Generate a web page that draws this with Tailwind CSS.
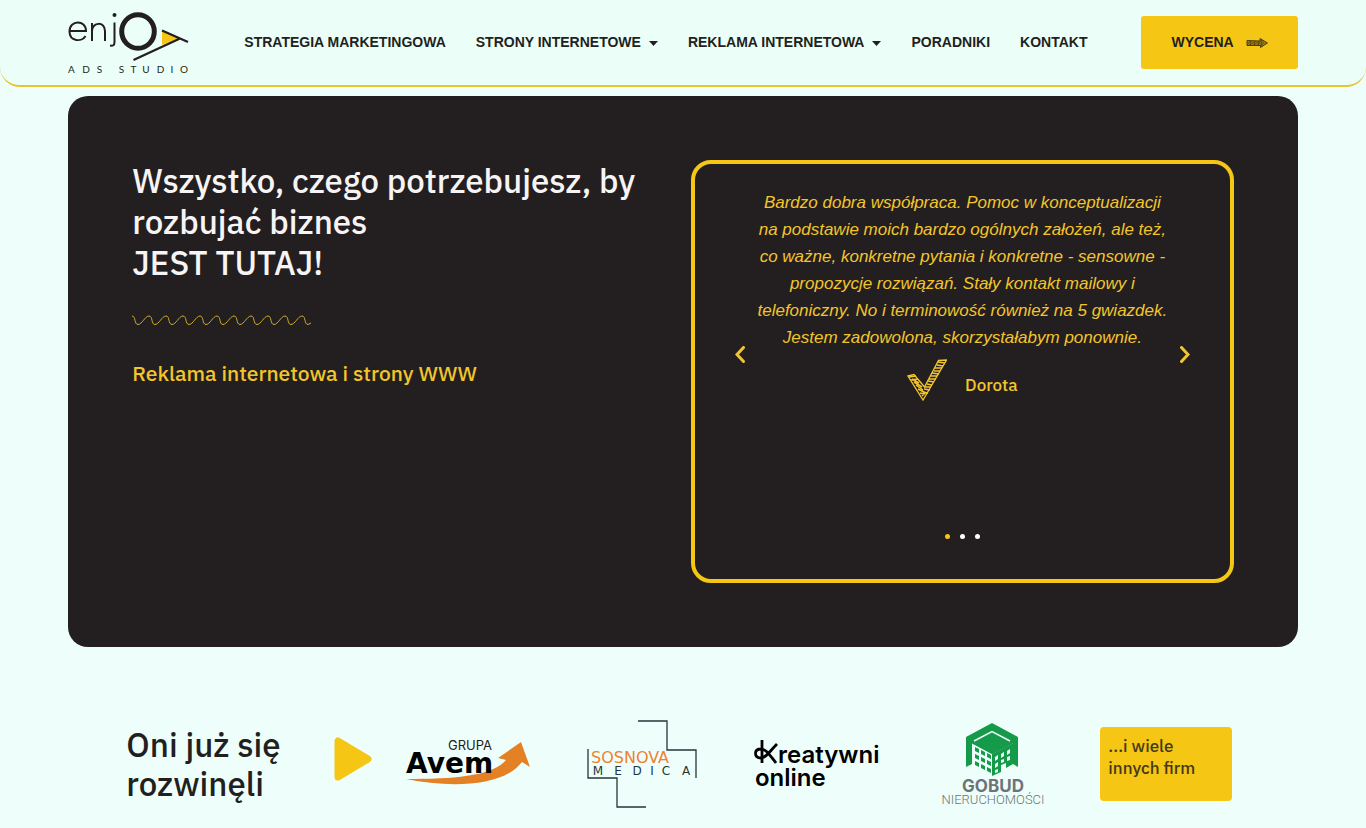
<!DOCTYPE html>
<html lang="pl">
<head>
    <meta charset="UTF-8">
    <meta name="viewport" content="width=device-width, initial-scale=1.0">
    <title>Enjoy Ads Studio</title>
    <script src="https://cdn.jsdelivr.net/npm/@tailwindcss/browser@4"></script>
</head>
<body class="bg-[#eefffb] text-[#231f20] font-['IBM_Plex_Sans','Noto_Sans',sans-serif] overflow-x-hidden">

    <!-- Header -->
    <header class="flex items-center justify-between px-[5%] h-[87px] border-b-2 border-[#e8c52f] rounded-b-[20px] bg-[#ebfff8]">
        <a href="#" aria-label="enjoy ads studio" class="mt-px">
            <svg class="w-[122px] h-[64px]" viewBox="0 0 122 64" fill="none" stroke="#231f20">
                <path d="M1.500 20H18C18 8.500 1.500 8.500 1.500 20.500C1.500 30.500 14 31.500 17.500 25" stroke-width="2"/>
                <path d="M24 30V12M24 20C24 11 37 10 37 20V30" stroke-width="2"/>
                <path d="M46.500 11.500V31C46.500 34.500 45 35 42 34.500" stroke-width="2"/>
                <circle cx="46.500" cy="4" r="2" fill="#231f20" stroke="none"/>
                <ellipse cx="70" cy="20.500" rx="16.300" ry="16.800" stroke-width="5"/>
                <path d="M94 19.500L112 27.500L94 34Z" fill="#f6c614" stroke="none"/>
                <path d="M94 19.500L120 31M65.500 49L112 27.500" stroke-width="2.300"/>
                <g fill="#231f20" stroke="none" font-family="Lato, sans-serif" font-size="10" text-anchor="middle">
                    <text x="3.500" y="61.500">A</text>
                    <text x="18" y="61.500">D</text>
                    <text x="31.500" y="61.500">S</text>
                    <text x="53.500" y="61.500">S</text>
                    <text x="65.500" y="61.500">T</text>
                    <text x="78" y="61.500">U</text>
                    <text x="92.500" y="61.500">D</text>
                    <text x="104" y="61.500">I</text>
                    <text x="116" y="61.500">O</text>
                </g>
            </svg>
        </a>
        <nav class="flex items-center gap-[30px] font-['Liberation_Sans',sans-serif] font-bold text-[14px]">
            <a href="#">STRATEGIA MARKETINGOWA</a>
            <a href="#" class="flex items-center gap-2">STRONY INTERNETOWE
                <svg class="w-[9px] h-[5px] mt-0.5" viewBox="0 0 9 5"><path d="M0 0H9L4.500 5Z" fill="#231f20"/></svg>
            </a>
            <a href="#" class="flex items-center gap-2">REKLAMA INTERNETOWA
                <svg class="w-[9px] h-[5px] mt-0.5" viewBox="0 0 9 5"><path d="M0 0H9L4.500 5Z" fill="#231f20"/></svg>
            </a>
            <a href="#">PORADNIKI</a>
            <a href="#">KONTAKT</a>
        </nav>
        <button class="flex items-center gap-3 h-[53px] px-[30px] rounded-[3px] bg-[#f6c614] font-['Liberation_Sans',sans-serif] font-bold text-[14px]">WYCENA
            <svg class="w-[22px] h-[10px]" viewBox="0 0 22 10" fill="none" stroke="#4a3d14" stroke-width="1">
                <path d="M1 2.500L14 3L14 0.500L21.500 5L14.500 9.500L14.500 7.500L1 7.500Z" fill="#9b7c13"/>
                <path d="M1 6.500L5 3L4 7L9 3L8 7L13 3L12 7L16 2L15 8L18 4" stroke-width="0.700"/>
            </svg>
        </button>
    </header>

    <main class="px-[5%]">
        <!-- Hero -->
        <section class="mt-[9px] grid grid-cols-2 gap-4 p-16 rounded-[20px] bg-[#231f20]">
            <div>
                <h1 class="text-[#f7f4f5] font-medium text-[33px] leading-[41px] whitespace-nowrap">Wszystko, czego potrzebujesz, by<br>rozbujać biznes<br>JEST TUTAJ!</h1>
                <svg class="mt-8 w-[180px] h-[11px]" viewBox="0 0 180 11" fill="none" stroke="#cfae2a" stroke-width="1">
                    <path d="M0 1C4 1 2 9.500 6 9.500C10 9.500 13 1 17 1C21 1 19 9.500 23 9.500C27 9.500 30 1 34 1C38 1 36 9.500 40 9.500C44 9.500 47 1 51 1C55 1 53 9.500 57 9.500C61 9.500 64 1 68 1C72 1 70 9.500 74 9.500C78 9.500 81 1 85 1C89 1 87 9.500 91 9.500C95 9.500 98 1 102 1C106 1 104 9.500 108 9.500C112 9.500 115 1 119 1C123 1 121 9.500 125 9.500C129 9.500 132 1 136 1C140 1 138 9.500 142 9.500C146 9.500 149 1 153 1C157 1 155 9.500 159 9.500C163 9.500 166 1 170 1C174 1 172 9.500 176 9.500L179 8"/>
                </svg>
                <h2 class="mt-8 text-[#f2c52b] font-medium text-[21px] leading-[30px]">Reklama internetowa i strony WWW</h2>
            </div>

            <!-- Testimonials -->
            <div class="border-4 border-[#f6c614] rounded-[20px] pt-6 pb-10 px-10 text-[#f2c52b]">
                <div class="flex items-center justify-between min-h-[332px]">
                    <button aria-label="Poprzednia opinia">
                        <svg class="w-[10px] h-[17px]" viewBox="0 0 10 17" fill="none" stroke="currentColor" stroke-width="3"><path d="M8.500 1.500L2 8.500L8.500 15.500" stroke-linecap="round"/></svg>
                    </button>
                    <div class="self-start pt-px text-center">
                        <p class="font-['Liberation_Sans',sans-serif] italic text-[17px] leading-[27px] whitespace-nowrap">Bardzo dobra współpraca. Pomoc w konceptualizacji<br>na podstawie moich bardzo ogólnych założeń, ale też,<br>co ważne, konkretne pytania i konkretne - sensowne -<br>propozycje rozwiązań. Stały kontakt mailowy i<br>telefoniczny. No i terminowość również na 5 gwiazdek.<br>Jestem zadowolona, skorzystałabym ponownie.</p>
                        <div class="mt-2 flex items-center justify-center gap-[18px]">
                            <svg class="w-[40px] h-[42px]" viewBox="0 0 40 42" fill="none" stroke="currentColor">
                                <path d="M1 17L7 15.500L17.500 28L31.500 1.500L39.500 1L16 41Z" stroke-width="1.300"/>
                                <path d="M2 18L9 17M4 21L11 20M5 20L12 24M7 23L15 28M9 26L16 31M11 30L17 33M13 34L18 35M15 37L19 33M31 3L38 4M30 6L36 7M28 9L35 9M27 12L33 12M25 14L32 15M24 17L30 17M22 20L29 20M21 22L27 23M20 25L25 26M18 28L24 28M17 30L23 31M16 33L21 34" stroke-width="1.500"/>
                            </svg>
                            <span class="pt-2.5 font-medium text-[17px] leading-6">Dorota</span>
                        </div>
                    </div>
                    <button aria-label="Następna opinia">
                        <svg class="w-[10px] h-[17px]" viewBox="0 0 10 17" fill="none" stroke="currentColor" stroke-width="3"><path d="M1.500 1.500L8 8.500L1.500 15.500" stroke-linecap="round"/></svg>
                    </button>
                </div>
                <div class="mt-3.5 flex justify-center gap-2.5">
                    <button aria-label="Opinia 1" class="size-[5px] rounded-full bg-[#f6c614]"></button>
                    <button aria-label="Opinia 2" class="size-[5px] rounded-full bg-white"></button>
                    <button aria-label="Opinia 3" class="size-[5px] rounded-full bg-white"></button>
                </div>
            </div>
        </section>

        <!-- Clients -->
        <section class="mt-[73px] pl-[58px] pr-[44px] grid grid-cols-[254px_repeat(5,1fr)] items-center justify-items-center">
            <div class="w-full flex items-center justify-between pr-2">
                <h2 class="font-medium text-[33px] leading-[39px] whitespace-nowrap">Oni już się<br>rozwinęli</h2>
                <svg class="w-[38px] h-[44px] -mt-2.5" viewBox="0 0 38 44"><path d="M4 4V40L34 22Z" fill="#f6c614" stroke="#f6c614" stroke-width="7" stroke-linejoin="round"/></svg>
            </div>
            <svg class="w-[126px] h-[46px] overflow-visible" viewBox="0 0 126 46">
                <path d="M1 38C50 38 88 35 101 19L93 17L116 1L125 26L117 21C98 46 45 47 1 38Z" fill="#e58125"/>
                <text x="43" y="9" font-family="Inter, sans-serif" font-size="13" fill="#222">GRUPA</text>
                <text x="1" y="32" font-family="DejaVu Sans, sans-serif" font-weight="700" font-size="28" fill="#000">Avem</text>
            </svg>
            <svg class="w-[110px] h-[88px]" viewBox="0 0 110 88" fill="none" stroke="#24363a" stroke-width="1.300">
                <path d="M51 1H80V30H109V58M1 29V58H30V87H59"/>
                <g stroke="none" font-family="DejaVu Sans, sans-serif">
                    <text x="4" y="43" font-size="16" fill="#ee8130">SOSNOVA</text>
                    <g font-size="12" fill="#24363a" text-anchor="middle">
                        <text x="11" y="55">M</text>
                        <text x="31" y="55">E</text>
                        <text x="50" y="55">D</text>
                        <text x="65" y="55">I</text>
                        <text x="79" y="55">C</text>
                        <text x="99" y="55">A</text>
                    </g>
                </g>
            </svg>
            <svg class="w-[126px] h-[52px] overflow-visible" viewBox="0 0 126 52">
                <path d="M8 2V25M23 6C15 14 12 20 7 20C3 20 1.500 18 1.500 15.500C1.500 13 3 11 7 11C12 11 15 16 22 25" fill="none" stroke="#000" stroke-width="2.800"/>
                <text x="24" y="25" font-family="Inter, sans-serif" font-weight="600" font-size="24" fill="#000">reatywni</text>
                <text x="1" y="48" font-family="Inter, sans-serif" font-weight="600" font-size="24" fill="#000">online</text>
            </svg>
            <svg class="w-[108px] h-[84px]" viewBox="0 0 108 84">
                <path d="M54 1L80 15V45L75 42V21L54 32L34 21V42L28 45V15Z" fill="#159a49"/>
                <path d="M54 10L75 21L54 32L33 21Z" fill="#159a49"/>
                <path d="M36 19L54 9.500L72 19" fill="none" stroke="#eefffb" stroke-width="1.500"/>
                <path d="M54 32L75 21V42L68 46V41L63 43V50L54 54Z" fill="#159a49"/>
                <path d="M37 25L41 27V31L37 29ZM43 28L47 30V34L43 32ZM49 31L53 33V37L49 35ZM37 32L41 34V38L37 36ZM43 35L47 37V41L43 39ZM49 38L53 40V44L49 42ZM37 39L41 41V45L37 43ZM43 42L47 44V48L43 46ZM49 45L53 47V51L49 49Z" fill="#159a49"/>
                <path d="M57 35L60 33V37L57 39ZM63 32L66 30V34L63 36ZM69 29L72 27V31L69 33ZM57 42L60 40V44L57 46ZM63 38L66 37V40L63 41ZM69 35L72 34V38L69 39ZM57 48L60 47V50L57 51Z" fill="#eefffb"/>
                <text x="55" y="70" text-anchor="middle" font-family="Inter, sans-serif" font-weight="700" font-size="17" fill="#6d7477">GOBUD</text>
                <text x="55" y="82" text-anchor="middle" font-family="Roboto, sans-serif" font-weight="300" font-size="13" fill="#6d7477">NIERUCHOMOŚCI</text>
            </svg>
            <a href="#" class="w-[132px] h-[74px] p-2 rounded-[4px] bg-[#f6c614] text-[#453a18] font-medium text-[17px] leading-[22px]">...i wiele<br>innych firm</a>
        </section>
    </main>

</body>
</html>
